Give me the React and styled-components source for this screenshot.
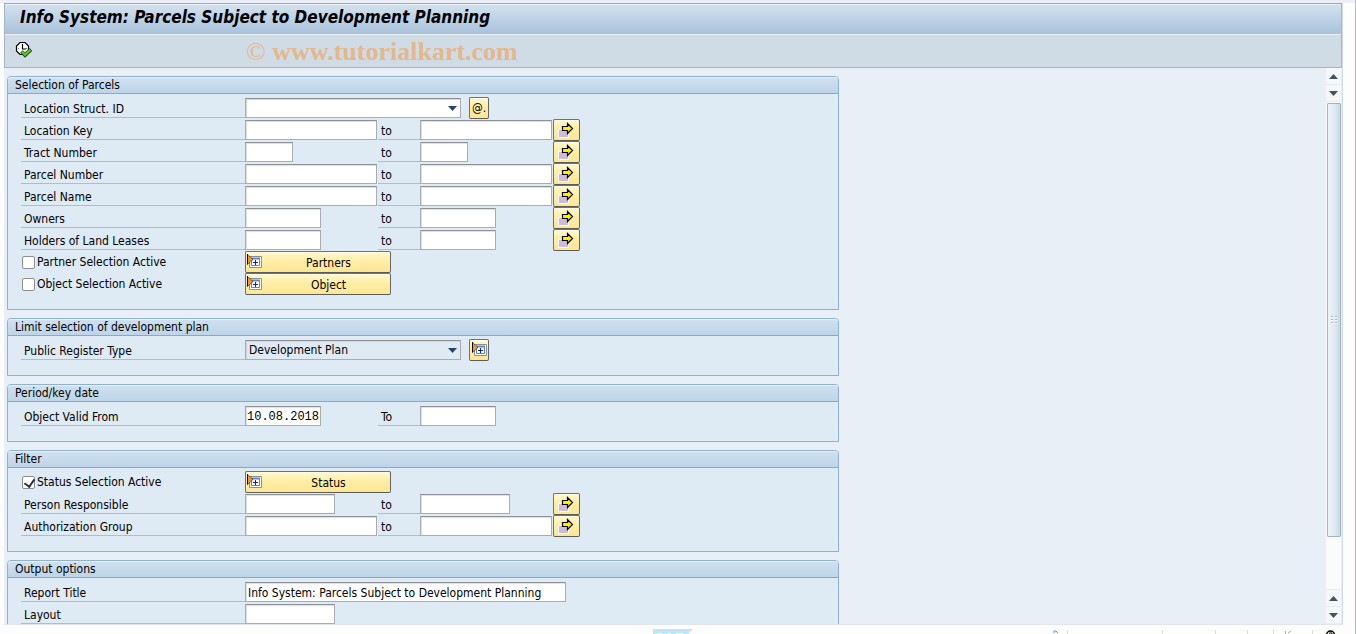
import React from "react"
import styled, { createGlobalStyle } from "styled-components"

const GlobalStyle = createGlobalStyle`
    * {
        box-sizing: border-box;
    }

    body {
        margin: 0;
        background: #fdfdfd;
        color: #000;
        font: 12px/16px "DejaVu Sans Condensed", "DejaVu Sans", sans-serif;
    }

    button, input, select {
        margin: 0;
        color: inherit;
        font: inherit;
        border-radius: 0;
    }
`

const Page = styled.div`
    display: flex;
    flex-direction: column;
    height: 100vh;
    padding: 3px 12px 0 4px;
    overflow: hidden;
    background: linear-gradient(#eceff8 3px, #fdfdfd 3px);
    border-right: 1px solid #b5bbc2;
`

const Window = styled.div`
    display: flex;
    flex: 1;
    flex-direction: column;
    min-height: 0;
    background: #e8eff6;
    border-right: 1px solid #d0d8e8;
    border-bottom: 1px solid #e2e6f0;
`

const Header = styled.header`
    border: 1px solid #a3b6c8;
    border-top-color: #98a9bc;
`

const TitleBar = styled.h1`
    height: 31px;
    margin: 0;
    padding: 0 15px;
    font-size: 17px;
    font-style: italic;
    font-weight: 700;
    line-height: 25px;
    white-space: nowrap;
    background: linear-gradient(#d2e1ed, #a9c2dc);
    border-top: 1px solid #e8f0f6;
    border-bottom: 1px solid #e8f0f6;
`

const Toolbar = styled.div`
    display: flex;
    align-items: center;
    gap: 214px;
    height: 32px;
    padding: 0 10px;
    background: #cfdce6;
`

const IconButton = styled.button`
    display: flex;
    padding: 0 0 4px;
    background: none;
    border: 0;
`

const Watermark = styled.span`
    padding-top: 2px;
    color: #e4b78c;
    font: 700 26px/32px "Liberation Serif", serif;
    white-space: nowrap;

    span {
        font-weight: 400;
    }
`

const Body = styled.div`
    display: flex;
    flex: 1;
    min-height: 0;
    padding-right: 1px;
`

const Form = styled.form`
    display: flex;
    flex: 1;
    flex-direction: column;
    gap: 8px;
    min-width: 0;
    padding: 8px 3px 0;
    overflow: hidden;
`

const Group = styled.fieldset`
    flex: none;
    width: 100%;
    max-width: 832px;
    min-width: 0;
    margin: 0;
    padding: 0;
    background: #deeaf4;
    border: 1px solid #8fb0cf;
    border-radius: 4px 4px 0 0;
`

const GroupTitle = styled.div`
    height: 17px;
    padding: 0 7px;
    background: linear-gradient(#cfe0ef, #bdd4e9);
    border-top: 1px solid #e6f1f9;
    border-bottom: 1px solid #89a9c9;
    border-radius: 3px 3px 0 0;
    line-height: 14px;
`

const Rows = styled.div`
    padding: 3px 13px 14px;
`

const Row = styled.div`
    display: grid;
    grid-template-columns: 224px 133px 42px 133px 27px;
    align-items: center;
    height: 22px;
`

const Label = styled.label`
    height: 20px;
    padding-left: 3px;
    border-bottom: 1px solid #b3bcc5;
    line-height: 22px;
    white-space: nowrap;
`

const Check = styled.label`
    display: flex;
    align-items: center;
    gap: 2px;
    padding-left: 1px;
    line-height: 22px;
    white-space: nowrap;
`

const Tick = styled.input`
    display: grid;
    place-items: center;
    width: 13px;
    height: 13px;
    appearance: none;
    background: #fff;
    border: 1px solid #8b8f94;
    border-radius: 2px;

    &:checked::before {
        content: "";
        width: 5px;
        height: 8px;
        margin: 0 0 2px 1px;
        border: solid #26303c;
        border-width: 0 2px 2px 0;
        transform: rotate(35deg);
    }
`

const Input = styled.input`
    width: ${({ $width }) => $width}px;
    height: 20px;
    padding: 1px ${({ $mono }) => $mono ? 1 : 2}px 0;
    background: #fff;
    border: 1px solid #a9adb2;
    border-top-color: #8e9297;
    box-shadow: inset 1px 1px 1px #dcdfe3;
    font-family: ${({ $mono }) => $mono ? '"Liberation Mono", monospace' : "inherit"};
`

const Wide = styled.div`
    display: flex;
    grid-column: 2 / -1;
    align-items: center;
    gap: 8px;
`

const Dropdown = styled.div`
    display: grid;
    align-items: center;
    width: 216px;

    select, svg {
        grid-area: 1 / 1;
    }

    svg {
        justify-self: end;
        margin-right: 4px;
        pointer-events: none;
    }
`

const Select = styled.select`
    height: 20px;
    padding: 0 3px;
    appearance: none;
    background: ${({ $locked }) => $locked ? "#dfeaf4" : "#fff"};
    border: 1px solid #a9adb2;
    border-top-color: #8e9297;
    box-shadow: inset 1px 1px 1px #d0d5da;
`

const Button = styled.button`
    display: flex;
    align-items: center;
    justify-content: center;
    width: ${({ $width }) => $width}px;
    height: 22px;
    padding: 0;
    background: linear-gradient(#fff9cf, #ffeea6 45%, #fbe694);
    border: 1px solid #77725f;
    border-right-color: #68665c;
    border-bottom-color: #5d5c57;
    border-radius: 2px;
    box-shadow: inset 0 1px #fffbe4;

    svg {
        flex: none;
    }

    span {
        flex: 1;
        padding: 1px 0 0 4px;
    }
`

const Scrollbar = styled.div`
    display: flex;
    flex-direction: column;
    gap: 1px;
    width: 15px;
    padding-bottom: 1px;
    background: #e9edf2;
`

const ScrollButton = styled.button`
    display: flex;
    align-items: center;
    justify-content: center;
    height: 16px;
    padding: 0;
    background: #f5f8fb;
    border: 0;
`

const Track = styled.div`
    flex: 1;
    padding: 1px 0 0 1px;
    background: #fafbfc;
`

const Thumb = styled.div`
    display: flex;
    align-items: center;
    justify-content: center;
    height: 90%;
    max-height: calc(100% - 52px);
    background: linear-gradient(90deg, #edf4fa, #dde8f2 60%, #c8d8e6);
    border: 1px solid #9fb3c6;
    border-radius: 1px;
`

const Footer = styled.footer`
    display: flex;
    flex: none;
    align-items: flex-end;
    height: 9px;
    padding-left: 48.5%;
    overflow: hidden;
`

const StatusBar = styled.div`
    display: flex;
    align-items: flex-end;
    margin-left: auto;

    svg {
        display: block;
    }
`

const ExecuteIcon = () => (
    <svg width="17" height="17" viewBox="0 0 17 17">
        <path d="M5 1.500h5l3.500 3.500v5L10 13.500H5L1.500 10V5z" fill="#fff" stroke="#000" strokeWidth="1.200" />
        <path d="M7.500 3v5H11" fill="none" stroke="#000" strokeWidth="1.200" />
        <path d="M3 7.500h1M7.500 12v-1M12 7.500h-1" stroke="#777" />
        <path d="M6.500 10.500l3.500 3.500 6-5.500" fill="none" stroke="#1d4d0a" strokeWidth="3.800" />
        <path d="M7 10.800l3 2.900 5.500-5" fill="none" stroke="#64c832" strokeWidth="2.200" />
    </svg>
)

const ArrowIcon = () => (
    <svg width="17" height="18" viewBox="0 0 17 18">
        <path d="M.5 8.500h10v8H.5z" fill="#cdbbd9" stroke="#fff" />
        <path d="M4.500 5.500h5v-3l5 5-5 5v-3h-5z" fill="#ffee00" stroke="#000" strokeWidth="1.200" />
    </svg>
)

const ExpandIcon = () => (
    <svg width="17" height="16" viewBox="0 0 17 16">
        <path d="M3.500 2.500h12v11h-12z" fill="#fff" stroke="#8b8f96" />
        <path d="M5.500 4.500h8v7h-8z" fill="#fff" stroke="#5d86c4" />
        <path d="M5 4.500h9" stroke="#5d86c4" strokeWidth="2" />
        <path d="M7 8.500h5M9.500 6v5" stroke="#1c1ca8" />
        <path d="M1 .5v10l6-5z" fill="#f7981d" />
        <path d="M1.500 0v10.500" stroke="#000" />
        <path d="M1.500 .5l5.500 5-5.500 5" fill="none" stroke="#000" strokeWidth=".5" />
    </svg>
)

const Caret = () => (
    <svg width="9" height="5" viewBox="0 0 9 5">
        <path d="M0 0h9L4.500 5z" fill="#2a406e" />
    </svg>
)

const ScrollArrow = ({ up }) => (
    <svg width="9" height="5" viewBox="0 0 9 5">
        <path d={up ? "M0 5h9L4.500 0z" : "M0 0h9L4.500 5z"} fill="#44535f" />
    </svg>
)

const Grip = () => (
    <svg width="6" height="9" viewBox="0 0 6 9">
        <path d="M0 .5h2M4 .5h2M0 3.500h2M4 3.500h2M0 6.500h2M4 6.500h2" stroke="#a9b9c9" />
        <path d="M0 1.500h2M4 1.500h2M0 4.500h2M4 4.500h2M0 7.500h2M4 7.500h2" stroke="#fff" />
    </svg>
)

const Logo = () => (
    <svg width="40" height="5" viewBox="0 0 40 5">
        <path d="M0 0h40l-5 5H0z" fill="#bfe6f7" />
        <text x="1" y="14" fill="#fff" fontFamily="Liberation Sans, sans-serif" fontSize="15" fontWeight="700">SAP</text>
    </svg>
)

const StatusIcons = () => (
    <svg width="290" height="4" viewBox="0 0 290 4">
        <path d="M1 3V1h2l2 2" fill="none" stroke="#6d8bb0" />
        <path d="M14.500 0v4M109.500 0v4M162.500 0v4M194.500 0v4M220.500 0v4M259.500 0v4" stroke="#dcdcdc" />
        <path d="M232.500 1v3M235 3l3-2" stroke="#aaa" />
        <circle cx="277.500" cy="5" r="4" fill="#fff" stroke="#000" strokeWidth="1.400" />
        <path d="M276 3h3v1" fill="none" stroke="#000" />
    </svg>
)

const Range = ({ id, label, to = "to", width, more = true, ...input }) => (
    <Row>
        <Label htmlFor={id}>{label}</Label>
        <Input id={id} $width={width} {...input} />
        <Label htmlFor={`${id}-to`}>{to}</Label>
        <Input id={`${id}-to`} $width={width} />
        {more && (
            <Button type="button" $width={27} aria-label={`Multiple selection for ${label}`}>
                <ArrowIcon />
            </Button>
        )}
    </Row>
)

const Toggle = ({ label, action, checked }) => (
    <Row>
        <Check>
            <Tick type="checkbox" defaultChecked={checked} />
            {label}
        </Check>
        <Wide>
            <Button type="button" $width={146}>
                <ExpandIcon />
                <span>{action}</span>
            </Button>
        </Wide>
    </Row>
)

const Section = ({ title, children }) => (
    <Group aria-label={title}>
        <GroupTitle>{title}</GroupTitle>
        <Rows>{children}</Rows>
    </Group>
)

export default () => {
    return (
        <Page>
            <GlobalStyle />

            <Window>
                <Header>
                    <TitleBar>Info System: Parcels Subject to Development Planning</TitleBar>
                    <Toolbar>
                        <IconButton type="button" aria-label="Execute"><ExecuteIcon /></IconButton>
                        <Watermark><span>©</span> www.tutorialkart.com</Watermark>
                    </Toolbar>
                </Header>

                <Body>
                    <Form>
                        <Section title="Selection of Parcels">
                            <Row>
                                <Label htmlFor="structure">Location Struct. ID</Label>
                                <Wide>
                                    <Dropdown>
                                        <Select id="structure"><option></option></Select>
                                        <Caret />
                                    </Dropdown>
                                    <Button type="button" $width={20}>@.</Button>
                                </Wide>
                            </Row>
                            <Range id="location" label="Location Key" width={132} />
                            <Range id="tract" label="Tract Number" width={48} />
                            <Range id="number" label="Parcel Number" width={132} />
                            <Range id="name" label="Parcel Name" width={132} />
                            <Range id="owners" label="Owners" width={76} />
                            <Range id="holders" label="Holders of Land Leases" width={76} />
                            <Toggle label="Partner Selection Active" action="Partners" />
                            <Toggle label="Object Selection Active" action="Object" />
                        </Section>

                        <Section title="Limit selection of development plan">
                            <Row>
                                <Label htmlFor="register">Public Register Type</Label>
                                <Wide>
                                    <Dropdown>
                                        <Select id="register" $locked><option>Development Plan</option></Select>
                                        <Caret />
                                    </Dropdown>
                                    <Button type="button" $width={20} aria-label="Expand"><ExpandIcon /></Button>
                                </Wide>
                            </Row>
                        </Section>

                        <Section title="Period/key date">
                            <Range id="valid" label="Object Valid From" to="To" width={76} more={false} $mono defaultValue="10.08.2018" />
                        </Section>

                        <Section title="Filter">
                            <Toggle label="Status Selection Active" action="Status" checked />
                            <Range id="person" label="Person Responsible" width={90} />
                            <Range id="group" label="Authorization Group" width={132} />
                        </Section>

                        <Section title="Output options">
                            <Row>
                                <Label htmlFor="report">Report Title</Label>
                                <Wide>
                                    <Input id="report" $width={321} defaultValue="Info System: Parcels Subject to Development Planning" />
                                </Wide>
                            </Row>
                            <Row>
                                <Label htmlFor="layout">Layout</Label>
                                <Input id="layout" $width={90} />
                            </Row>
                        </Section>
                    </Form>

                    <Scrollbar>
                        <ScrollButton type="button" aria-label="Page up"><ScrollArrow up /></ScrollButton>
                        <ScrollButton type="button" aria-label="Line down"><ScrollArrow /></ScrollButton>
                        <Track><Thumb><Grip /></Thumb></Track>
                        <ScrollButton type="button" aria-label="Line up"><ScrollArrow up /></ScrollButton>
                        <ScrollButton type="button" aria-label="Page down"><ScrollArrow /></ScrollButton>
                    </Scrollbar>
                </Body>
            </Window>

            <Footer>
                <Logo />
                <StatusBar><StatusIcons /></StatusBar>
            </Footer>
        </Page>
    )
}
